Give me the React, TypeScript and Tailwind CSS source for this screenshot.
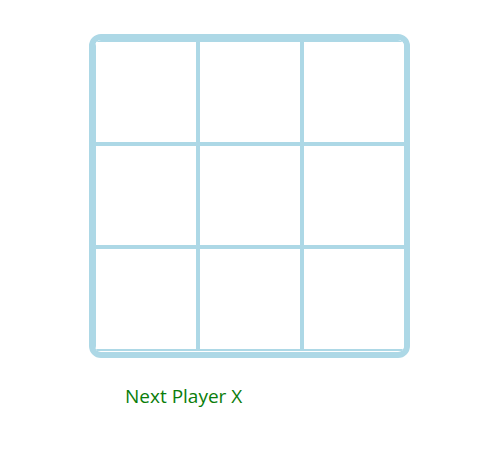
import React from "react";

export default function App() {
  const cells = Array.from({ length: 9 });
  return (
    <div className="w-[493px] h-[459px] bg-white" style={{ fontFamily: '"Segoe UI", "Open Sans", "Noto Sans", sans-serif' }}>
      <div className="pt-[34px] pl-[89px]">
        <div className="w-[321px] h-[324px] border-[6px] border-[#add8e6] rounded-[12px] overflow-hidden">
          <div className="grid grid-cols-[104px_104px_104px] grid-rows-[103.5px_103.5px_103.5px] w-[312px] -ml-[1px]">
            {cells.map((_, i) => (
              <button key={i} className="border-2 border-[#add8e6] bg-white" />
            ))}
          </div>
        </div>
        <div className="mt-[25px] ml-[36px] text-[19px] leading-[26px] text-[#0a7d0a]">Next Player X</div>
      </div>
    </div>
  );
}
